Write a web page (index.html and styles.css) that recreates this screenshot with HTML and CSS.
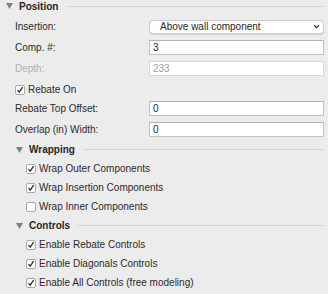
FILE: index.html
```html
<!DOCTYPE html>
<html lang="en">
<head>
  <meta charset="UTF-8" />
  <title>Position</title>
  <link rel="stylesheet" href="styles.css">
</head>
<body>
  <div class="panel">
    <div class="head head-top">
      <svg class="tri" width="7" height="6" viewBox="0 0 7 6"><path d="M0 0H7L3.5 6Z"/></svg>
      <span class="title">Position</span>
      <span class="rule"></span>
    </div>

    <div class="row r-first">
      <span class="label">Insertion:</span>
      <div class="select">
        <span>Above wall component</span>
        <svg width="7" height="5" viewBox="0 0 7 5"><path d="M1 1.2L3.5 3.6L6 1.2" fill="none" stroke="#333" stroke-width="1.3"/></svg>
      </div>
    </div>
    <div class="row">
      <span class="label">Comp. #:</span>
      <input class="field" type="text" value="3">
    </div>
    <div class="row">
      <span class="label muted">Depth:</span>
      <input class="field disabled" type="text" value="233" disabled>
    </div>
    <div class="row">
      <label class="check">
        <span class="box"><svg width="8" height="8" viewBox="0 0 8 8"><path d="M1.5 4.2L3.2 6.2L6.6 1.2" fill="none" stroke="#2a2a2a" stroke-width="1.3"/></svg></span>
        Rebate On
      </label>
    </div>
    <div class="row r-tight">
      <span class="label">Rebate Top Offset:</span>
      <input class="field" type="text" value="0">
    </div>
    <div class="row">
      <span class="label">Overlap (in) Width:</span>
      <input class="field" type="text" value="0">
    </div>

    <div class="sub">
      <div class="head">
        <svg class="tri" width="7" height="6" viewBox="0 0 7 6"><path d="M0 0H7L3.5 6Z"/></svg>
        <span class="title">Wrapping</span>
        <span class="rule"></span>
      </div>
      <label class="check line">
        <span class="box"><svg width="8" height="8" viewBox="0 0 8 8"><path d="M1.5 4.2L3.2 6.2L6.6 1.2" fill="none" stroke="#2a2a2a" stroke-width="1.3"/></svg></span>
        Wrap Outer Components
      </label>
      <label class="check line">
        <span class="box"><svg width="8" height="8" viewBox="0 0 8 8"><path d="M1.5 4.2L3.2 6.2L6.6 1.2" fill="none" stroke="#2a2a2a" stroke-width="1.3"/></svg></span>
        Wrap Insertion Components
      </label>
      <label class="check line">
        <span class="box"></span>
        Wrap Inner Components
      </label>

      <div class="head">
        <svg class="tri" width="7" height="6" viewBox="0 0 7 6"><path d="M0 0H7L3.5 6Z"/></svg>
        <span class="title">Controls</span>
        <span class="rule"></span>
      </div>
      <label class="check line">
        <span class="box"><svg width="8" height="8" viewBox="0 0 8 8"><path d="M1.5 4.2L3.2 6.2L6.6 1.2" fill="none" stroke="#2a2a2a" stroke-width="1.3"/></svg></span>
        Enable Rebate Controls
      </label>
      <label class="check line">
        <span class="box"><svg width="8" height="8" viewBox="0 0 8 8"><path d="M1.5 4.2L3.2 6.2L6.6 1.2" fill="none" stroke="#2a2a2a" stroke-width="1.3"/></svg></span>
        Enable Diagonals Controls
      </label>
      <label class="check line">
        <span class="box"><svg width="8" height="8" viewBox="0 0 8 8"><path d="M1.5 4.2L3.2 6.2L6.6 1.2" fill="none" stroke="#2a2a2a" stroke-width="1.3"/></svg></span>
        Enable All Controls (free modeling)
      </label>
    </div>
  </div>
</body>
</html>
```

FILE: styles.css
```css
* {
  margin: 0;
  padding: 0;
  box-sizing: border-box;
}
body {
  background: #ececec;
  font-family: 'Liberation Sans', Arial, sans-serif;
  font-size: 10px;
  color: #2b2b2b;
  overflow: hidden;
}
.panel {
  padding: 0 4px 0 6px;
}
.head {
  display: flex;
  align-items: center;
  height: 19px;
}
.head-top {
  height: 12px;
}
.tri {
  fill: #808080;
  margin-right: 6px;
  flex-shrink: 0;
}
.title {
  font-weight: bold;
  color: #262626;
}
.rule {
  flex: 1;
  height: 1px;
  background: #d6d6d6;
  margin-left: 8px;
}
.row {
  display: flex;
  align-items: center;
  height: 15px;
  margin-top: 6px;
  padding-left: 9px;
}
.r-first {
  margin-top: 7px;
}
.r-tight {
  margin-top: 4px;
}
.label {
  width: 134px;
  flex-shrink: 0;
}
.muted {
  color: #b2b2b2;
}
.select {
  flex: 1;
  height: 14px;
  display: flex;
  align-items: center;
  justify-content: space-between;
  background: #fff;
  border: 1px solid #cfcfcf;
  border-radius: 4px;
  box-shadow: 0 0.5px 1px rgba(0, 0, 0, 0.12);
  padding: 0 3px 0 10px;
  color: #262626;
}
.field {
  flex: 1;
  min-width: 0;
  height: 15px;
  background: #fff;
  border: 1px solid #c2c2c2;
  border-top-color: #b4b4b4;
  padding: 0 3px;
  font-family: inherit;
  font-size: 10px;
  color: #262626;
  outline: none;
}
.field.disabled {
  border-color: #d8d8d8;
  color: #a0a0a0;
}
.check {
  display: flex;
  align-items: center;
  gap: 3px;
}
.box {
  width: 10px;
  height: 10px;
  flex-shrink: 0;
  background: #fff;
  border: 1px solid #a9a9a9;
  border-radius: 2px;
  display: flex;
  align-items: center;
  justify-content: center;
}
.sub {
  margin-top: 3px;
  padding-left: 10px;
}
.line {
  height: 19px;
  padding-left: 10px;
}
```
